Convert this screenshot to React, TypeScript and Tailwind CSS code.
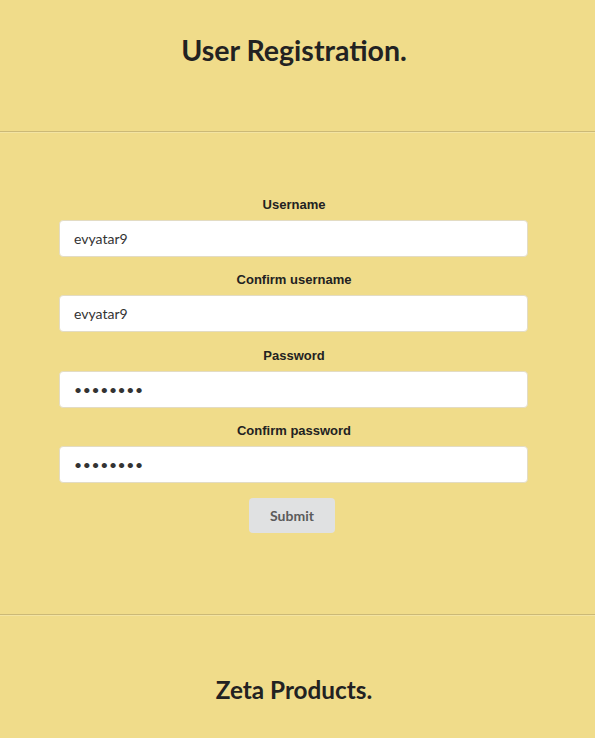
import React from 'react';

const fields = [
  { label: 'Username', type: 'text', value: 'evyatar9' },
  { label: 'Confirm username', type: 'text', value: 'evyatar9' },
  { label: 'Password', type: 'password', value: 'secret12' },
  { label: 'Confirm password', type: 'password', value: 'secret12' },
];

function Divider() {
  return <div className="h-[2px] w-full border-t border-[#cbb977] border-b border-b-[#f3e4a2]" />;
}

export default function App() {
  return (
    <div className="min-h-[738px] w-full bg-[#f0dc8a] text-[#222] font-['Lato','Liberation_Sans',sans-serif]">
      {/* Header */}
      <div className="w-[588px] pt-[32px] pb-[63px]">
        <h1 className="text-center text-[28.5px] font-bold leading-[36px]">User Registration.</h1>
      </div>
      <Divider />

      {/* Form */}
      <div className="w-[588px] pt-[64px] pb-[81px]">
        <form className="flex flex-col" onSubmit={e => e.preventDefault()}>
          {fields.map(f => (
            <div key={f.label} className="mb-[15.3px] flex flex-col items-center">
              <label className="mb-[7px] block text-[13px] leading-4 font-bold font-['Liberation_Sans',Arial,sans-serif] text-[#222]">
                {f.label}
              </label>
              <input
                type={f.type}
                defaultValue={f.value}
                className={`ml-[-1px] h-[37px] w-[469px] rounded-[4px] border border-[#e3dcc4] bg-white px-[14px] text-[14px] text-[#333] outline-none ${
                  f.type === 'password' ? 'tracking-[0.6px]' : ''
                }`}
              />
            </div>
          ))}
          <div className="flex justify-center pr-[4px]">
            <button
              type="submit"
              className="h-[35px] w-[86px] rounded-[4px] bg-[#e0e1e2] text-[14px] font-bold text-[#5b5b5b]"
            >
              Submit
            </button>
          </div>
        </form>
      </div>
      <Divider />

      {/* Footer */}
      <div className="w-[588px] pt-[58px] pb-[32px]">
        <h2 className="text-center text-[24.3px] font-bold leading-[31px]">Zeta Products.</h2>
      </div>
    </div>
  );
}
